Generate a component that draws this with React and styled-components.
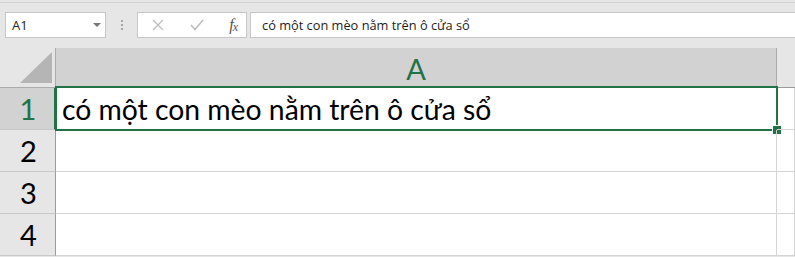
import React from 'react'
import styled, { createGlobalStyle } from 'styled-components'

const GlobalStyle = createGlobalStyle`
  body {
    margin: 0px;
    background: #ffffff;
    overflow: hidden;
  }
`

const GREEN = '#217346'
const CELL_FONT = '"Lato", "Noto Sans", sans-serif'
const UI_FONT = '"Open Sans", "Noto Sans", sans-serif'

const Page = styled.div`
  width: 795px;
  height: 257px;
  background: #e6e6e6;
  overflow: hidden;
`

const Toolbar = styled.div`
  display: flex;
  align-items: center;
  height: 45px;
  margin-top: 2px;
  border-top: 1px solid #d4d4d4;
  padding-left: 5px;
  box-sizing: border-box;
`

const NameBox = styled.div`
  display: flex;
  align-items: center;
  justify-content: space-between;
  width: 101px;
  height: 26px;
  box-sizing: border-box;
  background: #fff;
  border: 1px solid #c6c6c6;
  padding: 0 4px 0 6px;
  font-family: ${UI_FONT};
  font-size: 13px;
  color: #222;
`

const Caret = styled.span`
  width: 0;
  height: 0;
  border-left: 4px solid transparent;
  border-right: 4px solid transparent;
  border-top: 4px solid #777;
`

const Dots = styled.div`
  display: flex;
  flex-direction: column;
  gap: 2px;
  margin: 0 14px 0 15px;
  span {
    width: 2px;
    height: 2px;
    background: #a6a6a6;
  }
`

const ButtonGroup = styled.div`
  display: flex;
  align-items: center;
  width: 110px;
  height: 26px;
  box-sizing: border-box;
  background: #fff;
  border: 1px solid #c6c6c6;
  padding: 0 9px 0 13px;
  justify-content: space-between;
`

const IconButton = styled.span`
  display: flex;
  align-items: center;
  justify-content: center;
  width: 14px;
  height: 14px;
`

const Fx = styled.span`
  font-family: "Liberation Serif", serif;
  font-style: italic;
  font-size: 16px;
  color: #555;
  letter-spacing: -1px;
  line-height: 1;
  sub {
    font-size: 12px;
    vertical-align: -1px;
  }
`

const FormulaInput = styled.div`
  flex: 1;
  height: 26px;
  margin-left: 3px;
  box-sizing: border-box;
  background: #fff;
  border: 1px solid #c6c6c6;
  border-right: none;
  display: flex;
  align-items: center;
  padding-left: 11px;
  font-family: ${UI_FONT};
  font-size: 12.8px;
  color: #222;
`

const Sheet = styled.div`
  display: grid;
  grid-template-columns: 56px 721px 1fr;
  grid-template-rows: 40px repeat(4, 42px);
  margin-top: 1px;
  background: #fff;
`

const Corner = styled.div`
  background: #e6e6e6;
  border-right: 1px solid #ababab;
  border-bottom: 1px solid #ababab;
  box-sizing: border-box;
  position: relative;
  &::after {
    content: '';
    position: absolute;
    right: 3px;
    bottom: 4px;
    width: 0;
    height: 0;
    border-left: 32px solid transparent;
    border-bottom: 31px solid #b5b5b5;
  }
`

const ColHeader = styled.div`
  display: flex;
  align-items: center;
  justify-content: center;
  box-sizing: border-box;
  background: ${p => (p.$selected ? '#d2d2d2' : '#e6e6e6')};
  border-right: 1px solid #ababab;
  border-bottom: ${p => (p.$selected ? `2px solid ${GREEN}` : '1px solid #9b9b9b')};
  font-family: ${CELL_FONT};
  font-size: 29px;
  color: ${p => (p.$selected ? GREEN : '#000')};
  padding-top: 2px;
`

const HeaderFill = styled.div`
  background: #e6e6e6;
  border-bottom: 1px solid #9b9b9b;
  box-sizing: border-box;
`

const RowHeader = styled.div`
  display: flex;
  align-items: center;
  justify-content: center;
  box-sizing: border-box;
  background: ${p => (p.$selected ? '#d2d2d2' : '#e6e6e6')};
  border-right: ${p => (p.$selected ? `2px solid ${GREEN}` : '1px solid #9b9b9b')};
  border-bottom: 1px solid #c8c8c8;
  font-family: ${CELL_FONT};
  font-size: 29px;
  color: ${p => (p.$selected ? GREEN : '#000')};
  padding-left: 2px;
`

const Cell = styled.div`
  position: relative;
  display: flex;
  align-items: center;
  box-sizing: border-box;
  border-right: 1px solid #d4d4d4;
  border-bottom: 1px solid #d4d4d4;
  padding-left: 6px;
  font-family: ${CELL_FONT};
  font-size: 28.3px;
  color: #000;
  white-space: nowrap;
`

const Selection = styled.div`
  position: absolute;
  left: -1px;
  top: -2px;
  right: -2px;
  bottom: -2px;
  border: 2px solid ${GREEN};
  pointer-events: none;
`

const Handle = styled.div`
  position: absolute;
  right: -6px;
  bottom: -6px;
  width: 8px;
  height: 8px;
  background: ${GREEN};
  border: 1px solid #fff;
`

const rows = [1, 2, 3, 4]

export default function App() {
  return (
    <>
      <GlobalStyle />
      <Page>
        <Toolbar>
          <NameBox>
            A1
            <Caret />
          </NameBox>
          <Dots>
            <span />
            <span />
            <span />
          </Dots>
          <ButtonGroup>
            <IconButton>
              <svg width="12" height="12" viewBox="0 0 12 12">
                <path d="M1 1 L11 11 M11 1 L1 11" stroke="#bdbdbd" strokeWidth="1.3" fill="none" />
              </svg>
            </IconButton>
            <IconButton>
              <svg width="14" height="12" viewBox="0 0 14 12">
                <path d="M1 6 L5 10.5 L13 1" stroke="#bdbdbd" strokeWidth="1.5" fill="none" />
              </svg>
            </IconButton>
            <Fx>
              f<sub>x</sub>
            </Fx>
          </ButtonGroup>
          <FormulaInput>có một con mèo nằm trên ô cửa sổ</FormulaInput>
        </Toolbar>
        <Sheet>
          <Corner />
          <ColHeader $selected>A</ColHeader>
          <HeaderFill />
          {rows.map(r => (
            <React.Fragment key={r}>
              <RowHeader $selected={r === 1}>{r}</RowHeader>
              <Cell>
                {r === 1 && 'có một con mèo nằm trên ô cửa sổ'}
                {r === 1 && (
                  <Selection>
                    <Handle />
                  </Selection>
                )}
              </Cell>
              <Cell />
            </React.Fragment>
          ))}
        </Sheet>
      </Page>
    </>
  )
}
